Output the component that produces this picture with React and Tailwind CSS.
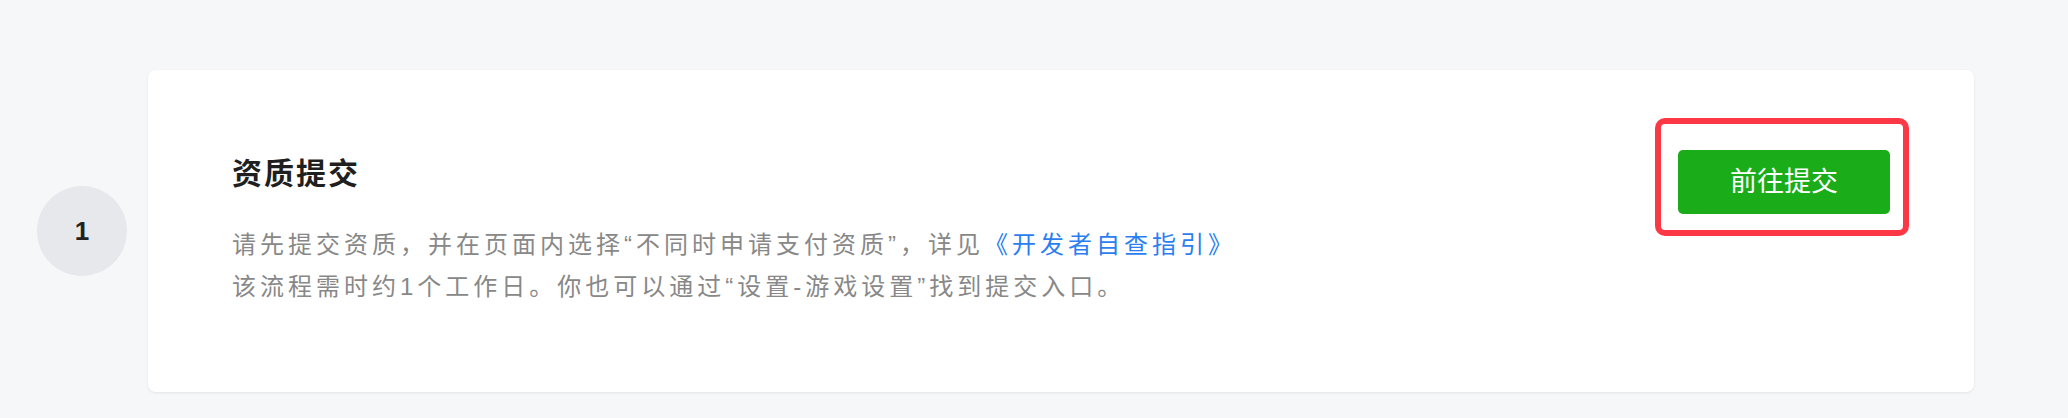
import React from 'react';

const FONT = "font-['Liberation_Sans','Noto_Sans_CJK_SC',sans-serif]";

export default function App() {
  return (
    <div className={`min-h-[418px] w-full bg-[#f6f7f9] pt-[70px] pl-[37px] pr-[94px] ${FONT}`}>
      <div className="flex items-center gap-[21px]">
        {/* step number */}
        <div className="flex h-[90px] w-[90px] shrink-0 items-center justify-center rounded-full bg-[#e6e8eb] text-[26px] font-bold text-[#222]">
          1
        </div>

        {/* card */}
        <div className="flex h-[322px] flex-1 items-start justify-between rounded-lg bg-white px-[84px] pt-[80px] shadow-[0_1px_3px_rgba(0,0,0,0.08)]">
          <div className="mt-[4px]">
            <h2 className="text-[30px] leading-[40px] font-bold tracking-[2px] text-[#1f1f1f]">资质提交</h2>
            <p className="mt-[30px] text-[24px] leading-[42px] tracking-[4px] text-[#888888]">
              请先提交资质，并在页面内选择“不同时申请支付资质”，详见
              <a href="#" className="text-[#2b7ef0]">《开发者自查指引》</a>
              <br />
              该流程需时约1个工作日。你也可以通过“设置-游戏设置”找到提交入口。
            </p>
          </div>

          <div className="relative">
            <button className="h-[64px] w-[212px] rounded-[5px] bg-[#1aad19] text-[27px] text-white">
              前往提交
            </button>
            {/* highlight annotation */}
            <div className="pointer-events-none absolute -top-[32px] -bottom-[22px] -left-[23px] -right-[19px] rounded-[10px] border-[6px] border-[#fd3846]"></div>
          </div>
        </div>
      </div>
    </div>
  );
}
